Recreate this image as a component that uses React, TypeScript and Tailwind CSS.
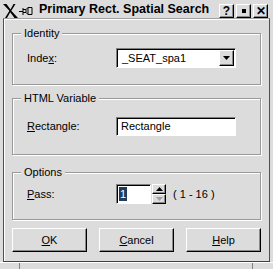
import React from "react";

const raised =
  "border border-t-white border-l-white border-r-black border-b-black shadow-[inset_-1px_-1px_0_#8a8a8a]";
const sunken =
  "border border-t-[#808080] border-l-[#808080] border-r-white border-b-white shadow-[inset_1px_1px_0_#000]";
const etched = "border border-[#9a9a9a] shadow-[inset_1px_1px_0_#fff,1px_1px_0_#fff]";

const Group = ({ title, className, children }: { title: string; className: string; children: React.ReactNode }) => (
  <div className={`${etched} ${className}`}>
    <div className="-mt-[7px] ml-[8px] flex">
      <span className="bg-[#dcdcdc] px-[3px] text-[11px] leading-[13px]">{title}</span>
    </div>
    {children}
  </div>
);

const Label = ({ u, rest, pre = "" }: { u: string; rest: string; pre?: string }) => (
  <span className="w-[89px] text-[11px]">
    {pre}
    <span className="underline">{u}</span>
    {rest}
  </span>
);

const TitleBtn = ({ children }: { children: React.ReactNode }) => (
  <div className={`${raised} flex h-[14px] w-[15px] items-center justify-center text-[12px] font-bold leading-none`}>
    {children}
  </div>
);

const App = () => {
  return (
    <div className="flex h-[269px] w-[273px] flex-col bg-[#dcdcdc] font-['Liberation_Sans',Arial,sans-serif] text-black">
      {/* title bar */}
      <div className="flex h-[18px] items-center pl-[3px] pr-[5px]">
        <svg width="15" height="14" viewBox="0 0 15 14" className="mt-[3px]">
          <path d="M0 0h3.5l4 5.5 3-5.5h2L8.3 6.8 15 14h-3.5L7.2 8.3 4 14H2l4.4-7.2z" fill="#000" />
        </svg>
        <svg width="14" height="10" viewBox="0 0 14 10" className="ml-[1px] mt-[3px]">
          <path d="M0 5.5h4M4 2v7M4 3.5h3l2-2h4v7h-4l-2-2H4M9 1.5v7M7 3.5v3" stroke="#000" strokeWidth="1" fill="none" />
        </svg>
        <span className="ml-[6px] text-[12.5px] font-bold leading-none">Primary Rect. Spatial Search</span>
        <div className="ml-auto mt-[4px] flex gap-[2px]">
          <TitleBtn>?</TitleBtn>
          <TitleBtn>
            <span className="block h-[4px] w-[4px] bg-black" />
          </TitleBtn>
          <TitleBtn>✕</TitleBtn>
        </div>
      </div>

      {/* client */}
      <div className="mx-[3px] flex h-[244px] flex-col border border-t-[#a0a0a0] border-l-[#505050] border-r-[#505050] border-b-[#404040] px-[8px] shadow-[inset_1px_1px_0_#fff]">
        <Group title="Identity" className="mt-[14px] h-[52px]">
          <div className="mt-[8px] flex items-center pl-[14px]">
            <Label pre="Inde" u="x" rest=":" />
            <div className={`${sunken} flex h-[20px] w-[120px] items-center bg-white`}>
              <span className="ml-[5px] flex-1 text-[11px]">_SEAT_spa1</span>
              <div className={`${raised} mr-[1px] flex h-[16px] w-[15px] items-center justify-center bg-[#dcdcdc]`}>
                <svg width="7" height="4" viewBox="0 0 7 4">
                  <path d="M0 0h7L3.5 4z" fill="#000" />
                </svg>
              </div>
            </div>
          </div>
        </Group>

        <Group title="HTML Variable" className="mt-[13px] h-[57px]">
          <div className="mt-[12px] flex items-center pl-[14px]">
            <Label u="R" rest="ectangle:" />
            <div className={`${sunken} flex h-[19px] w-[120px] items-center bg-white`}>
              <span className="ml-[4px] text-[11px]">Rectangle</span>
            </div>
          </div>
        </Group>

        <Group title="Options" className="mt-[17px] h-[48px]">
          <div className="mt-[5px] flex items-center pl-[14px]">
            <Label u="P" rest="ass:" />
            <div className={`${sunken} flex h-[20px] w-[35px] items-center bg-white`}>
              <span className="ml-[2px] bg-[#1f3c5c] px-[1px] text-[11px] leading-[14px] text-white">1</span>
            </div>
            <div className="ml-[1px] flex h-[20px] w-[14px] flex-col">
              <div className={`${raised} flex h-[10px] items-center justify-center`}>
                <svg width="7" height="4" viewBox="0 0 7 4">
                  <path d="M0 4h7L3.5 0z" fill="#000" />
                </svg>
              </div>
              <div className={`${raised} flex h-[10px] items-center justify-center`}>
                <svg width="7" height="4" viewBox="0 0 7 4">
                  <path d="M0 0h7L3.5 4z" fill="#a0a0a0" />
                </svg>
              </div>
            </div>
            <span className="ml-[7px] text-[11px]">( 1 - 16 )</span>
          </div>
        </Group>

        <div className="mt-[8px] flex justify-between">
          {[
            ["O", "K"],
            ["C", "ancel"],
            ["H", "elp"],
          ].map(([u, rest]) => (
            <div key={u} className={`${raised} flex h-[24px] w-[75px] items-center justify-center text-[11px]`}>
              <span className="underline">{u}</span>
              {rest}
            </div>
          ))}
        </div>
      </div>

      {/* bottom frame */}
      <div className="flex h-[7px] border-t border-t-white">
        <div className="w-[20px] border-r border-r-[#808080]" />
        <div className="flex-1 border-r border-r-[#808080]" />
        <div className="w-[20px]" />
      </div>
    </div>
  );
};

export default App;
